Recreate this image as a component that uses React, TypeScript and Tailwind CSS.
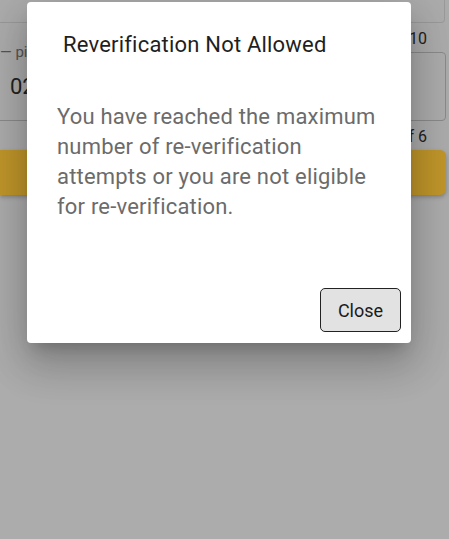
export default function App() {
  return (
    <div className="relative w-[449px] h-[539px] overflow-hidden bg-[#acacac] font-['Roboto',sans-serif]">
      {/* Page behind the dimmed backdrop */}
      <div className="flex flex-col">
        <div className="h-[23px] mr-[4px] border-b border-r border-[#9a9a9a] rounded-br-[4px]" />
        <div className="flex justify-end pr-[22px] pt-[6px] h-[29px] text-[16px] leading-[20px] text-[#222]">
          <span>1/10</span>
        </div>
        <div className="flex gap-[16px] h-[69px] pr-[3px]">
          <div className="relative flex-1 border border-l-0 border-[#8a8a8a] rounded-r-[4px] flex items-center pl-[10px]">
            <span className="absolute -top-[10px] left-0 bg-[#acacac] pr-[2px] text-[15px] leading-[18px] text-[#555]">— pin</span>
            <span className="text-[22px] text-[#222]">02</span>
          </div>
          <div className="flex-1 border border-[#8a8a8a] rounded-[4px]" />
        </div>
        <div className="flex justify-end pr-[22px] pt-[6px] h-[29px] text-[16px] leading-[20px] text-[#222]">
          <span>1 of 6</span>
        </div>
        <div className="h-[45px] mr-[3px] bg-[#c0962a] rounded-r-[6px] shadow-[0_2px_4px_rgba(0,0,0,0.25)]" />
      </div>

      {/* Dialog */}
      <div className="absolute left-[27px] top-[2px] w-[384px] h-[341px] bg-white rounded-[4px] shadow-[0_11px_15px_-7px_rgba(0,0,0,0.2),0_24px_38px_3px_rgba(0,0,0,0.14),0_9px_46px_8px_rgba(0,0,0,0.12)] flex flex-col">
        <h2 className="pt-[28px] pl-[36px] text-[22px] leading-[30px] tracking-[0.2px] text-[#1f1f1f] font-normal">
          Reverification Not Allowed
        </h2>
        <p className="mt-[42px] pl-[30px] pr-[20px] text-[22px] leading-[30px] tracking-[0.2px] text-[#6b6b6b]">
          You have reached the maximum number of re-verification attempts or you are not eligible for re-verification.
        </p>
        <div className="mt-auto flex justify-end pr-[10px] pb-[11px]">
          <button className="w-[81px] h-[44px] bg-[#e2e2e2] border border-[#222] rounded-[5px] text-[18px] text-[#1a1a1a]">
            Close
          </button>
        </div>
      </div>
    </div>
  );
}
